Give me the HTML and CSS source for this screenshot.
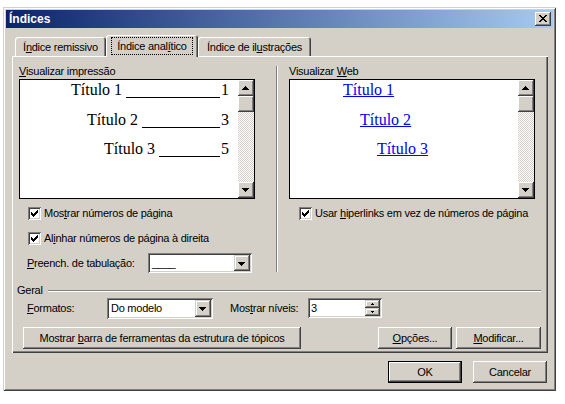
FILE: index.html
```html
<!DOCTYPE html>
<html lang="pt">
<head>
<meta charset="utf-8">
<title>Índices</title>
<link rel="stylesheet" href="styles.css">
</head>
<body>
<div class="window">
  <div class="titlebar">
    <span class="title">Índices</span>
    <span class="close"><svg width="16" height="14" viewBox="0 0 16 14" shape-rendering="crispEdges"><path d="M4 3h2v1H4z M10 3h2v1h-2z M5 4h2v1H5z M9 4h2v1H9z M6 5h4v1H6z M7 6h2v1H7z M6 7h4v1H6z M5 8h2v1H5z M9 8h2v1H9z M4 9h2v1H4z M10 9h2v1h-2z" fill="#000"/></svg></span>
  </div>

  <div class="tabs">
    <div class="tab t1"><span>Í<u>n</u>dice remissivo</span></div>
    <div class="tab t2 sel"><span class="focus">Índice anal<u>í</u>tico</span></div>
    <div class="tab t3"><span>Índice de il<u>u</u>strações</span></div>
  </div>

  <div class="panel">
    <div class="upper">
      <div class="col left">
        <div class="label"><u>V</u>isualizar impressão</div>
        <div class="preview">
          <div class="page print">
            <div class="row r1"><span>Título 1</span><span class="leader"></span><span>1</span></div>
            <div class="row r2"><span>Título 2</span><span class="leader"></span><span>3</span></div>
            <div class="row r3"><span>Título 3</span><span class="leader"></span><span>5</span></div>
          </div>
          <div class="scrollbar">
            <div class="sbtn"><svg width="12" height="12" viewBox="0 0 12 12" shape-rendering="crispEdges"><path d="M5 4h1v1H5z M4 5h3v1H4z M3 6h5v1H3z M2 7h7v1H2z" fill="#000"/></svg></div>
            <div class="thumb"></div>
            <div class="track"></div>
            <div class="sbtn"><svg width="12" height="12" viewBox="0 0 12 12" shape-rendering="crispEdges"><path d="M2 4h7v1H2z M3 5h5v1H3z M4 6h3v1H4z M5 7h1v1H5z" fill="#000"/></svg></div>
          </div>
        </div>
        <div class="check c1">
          <span class="box"><svg width="7" height="7" viewBox="0 0 7 7" shape-rendering="crispEdges"><path d="M6 0h1v1H6z M5 1h2v1H5z M0 2h1v1H0z M4 2h3v1H4z M0 3h2v1H0z M3 3h3v1H3z M0 4h5v1H0z M1 5h3v1H1z M2 6h1v1H2z" fill="#000"/></svg></span>
          <span>Mos<u>t</u>rar números de página</span>
        </div>
        <div class="check c2">
          <span class="box"><svg width="7" height="7" viewBox="0 0 7 7" shape-rendering="crispEdges"><path d="M6 0h1v1H6z M5 1h2v1H5z M0 2h1v1H0z M4 2h3v1H4z M0 3h2v1H0z M3 3h3v1H3z M0 4h5v1H0z M1 5h3v1H1z M2 6h1v1H2z" fill="#000"/></svg></span>
          <span>Al<u>i</u>nhar números de página à direita</span>
        </div>
        <div class="fieldrow">
          <span class="flabel tabfill"><u>P</u>reench. de tabulação:</span>
          <div class="combo tabcombo">
            <span class="value">____</span>
            <span class="cbtn"><svg width="12" height="13" viewBox="0 0 12 13" shape-rendering="crispEdges"><path d="M2 5h7v1H2z M3 6h5v1H3z M4 7h3v1H4z M5 8h1v1H5z" fill="#000"/></svg></span>
          </div>
        </div>
      </div>

      <div class="divider"></div>

      <div class="col right">
        <div class="label">Visualizar <u>W</u>eb</div>
        <div class="preview">
          <div class="page web">
            <div class="row r1"><a class="link">Título 1</a></div>
            <div class="row r2"><a class="link">Título 2</a></div>
            <div class="row r3"><a class="link">Título 3</a></div>
          </div>
          <div class="scrollbar">
            <div class="sbtn"><svg width="12" height="12" viewBox="0 0 12 12" shape-rendering="crispEdges"><path d="M5 4h1v1H5z M4 5h3v1H4z M3 6h5v1H3z M2 7h7v1H2z" fill="#000"/></svg></div>
            <div class="thumb"></div>
            <div class="track"></div>
            <div class="sbtn"><svg width="12" height="12" viewBox="0 0 12 12" shape-rendering="crispEdges"><path d="M2 4h7v1H2z M3 5h5v1H3z M4 6h3v1H4z M5 7h1v1H5z" fill="#000"/></svg></div>
          </div>
        </div>
        <div class="check c3">
          <span class="box"><svg width="7" height="7" viewBox="0 0 7 7" shape-rendering="crispEdges"><path d="M6 0h1v1H6z M5 1h2v1H5z M0 2h1v1H0z M4 2h3v1H4z M0 3h2v1H0z M3 3h3v1H3z M0 4h5v1H0z M1 5h3v1H1z M2 6h1v1H2z" fill="#000"/></svg></span>
          <span>Usar <u>h</u>iperlinks em vez de números de página</span>
        </div>
      </div>
    </div>

    <div class="geral">
      <span>Geral</span>
      <span class="etch"></span>
    </div>

    <div class="formats">
      <span class="flabel fmt"><u>F</u>ormatos:</span>
      <div class="combo fmtcombo">
        <span class="value">Do modelo</span>
        <span class="cbtn"><svg width="12" height="13" viewBox="0 0 12 13" shape-rendering="crispEdges"><path d="M2 5h7v1H2z M3 6h5v1H3z M4 7h3v1H4z M5 8h1v1H5z" fill="#000"/></svg></span>
      </div>
      <span class="flabel lvl">Mos<u>t</u>rar níveis:</span>
      <div class="spin">
        <span class="value">3</span>
        <span class="spinbtns">
          <span class="spbtn"><svg width="11" height="6" viewBox="0 0 11 6" shape-rendering="crispEdges"><path d="M5 2h1v1H5z M4 3h3v1H4z" fill="#000"/></svg></span>
          <span class="spbtn"><svg width="11" height="6" viewBox="0 0 11 6" shape-rendering="crispEdges"><path d="M4 2h3v1H4z M5 3h1v1H5z" fill="#000"/></svg></span>
        </span>
      </div>
    </div>

    <div class="buttons">
      <div class="btn outline"><span>Mostrar <u>b</u>arra de ferramentas da estrutura de tópicos</span></div>
      <div class="btn opc"><span><u>O</u>pções...</span></div>
      <div class="btn mod"><span><u>M</u>odificar...</span></div>
    </div>
  </div>

  <div class="footer">
    <div class="btn ok"><span>OK</span></div>
    <div class="btn cancel"><span>Cancelar</span></div>
  </div>
</div>
</body>
</html>
```

FILE: styles.css
```css
* { box-sizing: border-box; }

body {
  margin: 0;
  background: #fff;
  font: 11px/13px "Liberation Sans", Arial, sans-serif;
  letter-spacing: -0.25px;
  color: #000;
}

u { text-decoration: underline; text-underline-offset: 1px; }

.window {
  width: 553px;
  height: 384px;
  margin: 7px 0 0 3px;
  padding: 3px;
  background: #d4d0c8;
  box-shadow: inset 1px 1px #d4d0c8, inset -1px -1px #404040, inset 2px 2px #fff, inset -2px -2px #808080;
  display: flex;
  flex-direction: column;
}

.titlebar {
  height: 18px;
  flex: none;
  display: flex;
  align-items: center;
  justify-content: space-between;
  padding: 0 2px 0 3px;
  background: linear-gradient(to right, #0a246a, #a6caf0);
  color: #fff;
}

.title {
  font: bold 12px/14px "Liberation Sans", Arial, sans-serif;
  letter-spacing: 0;
}

.close {
  width: 16px;
  height: 14px;
  display: block;
  background: #d4d0c8;
  box-shadow: inset -1px -1px #404040, inset 1px 1px #fff, inset -2px -2px #808080;
}
.close svg { display: block; }

/* tabs */
.tabs {
  height: 21px;
  flex: none;
  margin: 7px 0 0 9px;
  display: flex;
  align-items: flex-end;
}

.tab {
  height: 19px;
  display: flex;
  align-items: center;
  justify-content: center;
  padding-top: 2px;
  background: #d4d0c8;
  border-radius: 3px 3px 0 0;
  white-space: nowrap;
  box-shadow: inset 1px 1px #fff, inset -1px 0 #404040, inset -2px 0 #808080;
}
.t1 { width: 91px; }
.t2 { width: 92px; }
.t3 { width: 113px; }

.tab.sel {
  height: 22px;
  margin-bottom: -1px;
  padding-top: 0;
  position: relative;
  z-index: 1;
}

.focus {
  display: block;
  padding: 1px 5px;
  line-height: 14px;
  outline: 1px dotted #000;
  outline-offset: 0;
}

/* panel */
.panel {
  height: 297px;
  flex: none;
  margin: 0 5px 0 6px;
  padding: 9px 6px 0 5px;
  background: #d4d0c8;
  box-shadow: inset 1px 1px #fff, inset -1px -1px #404040, inset -2px -2px #808080;
}

.upper {
  display: flex;
  margin-left: 2px;
}

.col.left { width: 236px; }
.col.right { width: 246px; }

.divider {
  width: 2px;
  height: 206px;
  margin: 1px 11px 0 21px;
  border-left: 1px solid #808080;
  border-right: 1px solid #fff;
}

.label {
  height: 13px;
  margin-bottom: 1px;
  white-space: nowrap;
}

.preview {
  height: 120px;
  display: flex;
  border: 1px solid #000;
  background: #fff;
}

.page {
  flex: 1;
  padding-top: 1px;
  display: flex;
  flex-direction: column;
  gap: 11.5px;
  font: 16px/18px "Liberation Serif", "Times New Roman", serif;
  letter-spacing: 0;
  white-space: nowrap;
}

.row { height: 18px; display: flex; }

.print .row { padding-right: 9px; }
.print .r1 { padding-left: 51px; }
.print .r2 { padding-left: 67px; }
.print .r3 { padding-left: 84px; }

.leader {
  flex: 1;
  height: 17px;
  margin: 0 1px 0 4px;
  border-bottom: 1px solid #000;
}

.web .r1 { padding-left: 53px; }
.web .r2 { padding-left: 70px; }
.web .r3 { padding-left: 87px; }

.link {
  color: #0000ff;
  text-decoration: underline;
}

.scrollbar {
  width: 16px;
  flex: none;
  display: flex;
  flex-direction: column;
}

.sbtn, .thumb {
  height: 16px;
  flex: none;
  background: #d4d0c8;
  box-shadow: inset -1px -1px #404040, inset 1px 1px #fff, inset -2px -2px #808080;
  display: flex;
  align-items: center;
  justify-content: center;
}
.sbtn svg { display: block; }

.track {
  flex: 1;
  background: repeating-conic-gradient(#fff 0 25%, #d4d0c8 0 50%) 0 0 / 2px 2px;
}

/* checkboxes */
.check {
  height: 13px;
  display: flex;
  align-items: center;
  gap: 3px;
  white-space: nowrap;
}
.c1 { margin: 8px 0 0 9px; }
.c2 { margin: 12px 0 0 9px; }
.c3 { margin: 8px 0 0 10px; }

.box {
  width: 13px;
  height: 13px;
  flex: none;
  background: #fff;
  box-shadow: inset 1px 1px #808080, inset -1px -1px #fff, inset 2px 2px #404040, inset -2px -2px #d4d0c8;
  display: flex;
  align-items: center;
  justify-content: center;
}
.box svg { display: block; }

/* fields */
.fieldrow {
  display: flex;
  align-items: center;
  margin: 8px 0 0 8px;
}

.flabel { white-space: nowrap; }
.tabfill { width: 121px; }

.combo {
  height: 20px;
  display: flex;
  align-items: center;
  padding: 2px;
  background: #fff;
  box-shadow: inset 1px 1px #808080, inset -1px -1px #fff, inset 2px 2px #404040, inset -2px -2px #d4d0c8;
}
.combo .value {
  flex: 1;
  padding-left: 2px;
  white-space: nowrap;
}
.tabcombo { width: 104px; }
.fmtcombo { width: 106px; height: 21px; }

.cbtn {
  width: 16px;
  align-self: stretch;
  background: #d4d0c8;
  box-shadow: inset -1px -1px #404040, inset 1px 1px #d4d0c8, inset -2px -2px #808080, inset 2px 2px #fff;
  display: flex;
  align-items: center;
  justify-content: center;
}
.cbtn svg { display: block; }

/* geral */
.geral {
  height: 13px;
  margin-top: 11px;
  display: flex;
  align-items: center;
  gap: 5px;
}
.etch {
  flex: 1;
  height: 2px;
  margin-right: 1px;
  border-top: 1px solid #808080;
  border-bottom: 1px solid #fff;
}

.formats {
  display: flex;
  align-items: flex-start;
  margin: 1px 0 0 10px;
}
.formats .flabel { line-height: 21px; }
.fmt { width: 80px; }
.lvl { width: 78px; margin-left: 17px; }

.spin {
  width: 74px;
  height: 20px;
  display: flex;
  padding: 2px;
  background: #fff;
  box-shadow: inset 1px 1px #808080, inset -1px -1px #fff, inset 2px 2px #404040, inset -2px -2px #d4d0c8;
}
.spin .value {
  flex: 1;
  padding-left: 1px;
  line-height: 16px;
}
.spinbtns {
  width: 15px;
  display: flex;
  flex-direction: column;
}
.spbtn {
  flex: 1;
  background: #d4d0c8;
  box-shadow: inset -1px -1px #404040, inset 1px 1px #d4d0c8, inset -2px -2px #808080, inset 2px 2px #fff;
  display: flex;
  align-items: center;
  justify-content: center;
}
.spbtn svg { display: block; width: 11px; height: 6px; }

/* buttons */
.buttons {
  display: flex;
  margin: 8px 1px 0 6px;
  gap: 4px;
}

.btn {
  height: 22px;
  display: flex;
  align-items: center;
  justify-content: center;
  background: #d4d0c8;
  white-space: nowrap;
  box-shadow: inset -1px -1px #404040, inset 1px 1px #fff, inset -2px -2px #808080, inset 2px 2px #d4d0c8;
}
.outline { width: 278px; margin-right: auto; }
.opc { width: 74px; }
.mod { width: 85px; }

.footer {
  display: flex;
  justify-content: flex-end;
  gap: 11px;
  margin: 8px 6px 0 0;
}
.ok, .cancel { width: 74px; }
.ok {
  box-shadow: inset 0 0 0 1px #000, inset -2px -2px #404040, inset 2px 2px #fff, inset -3px -3px #808080;
}
```
